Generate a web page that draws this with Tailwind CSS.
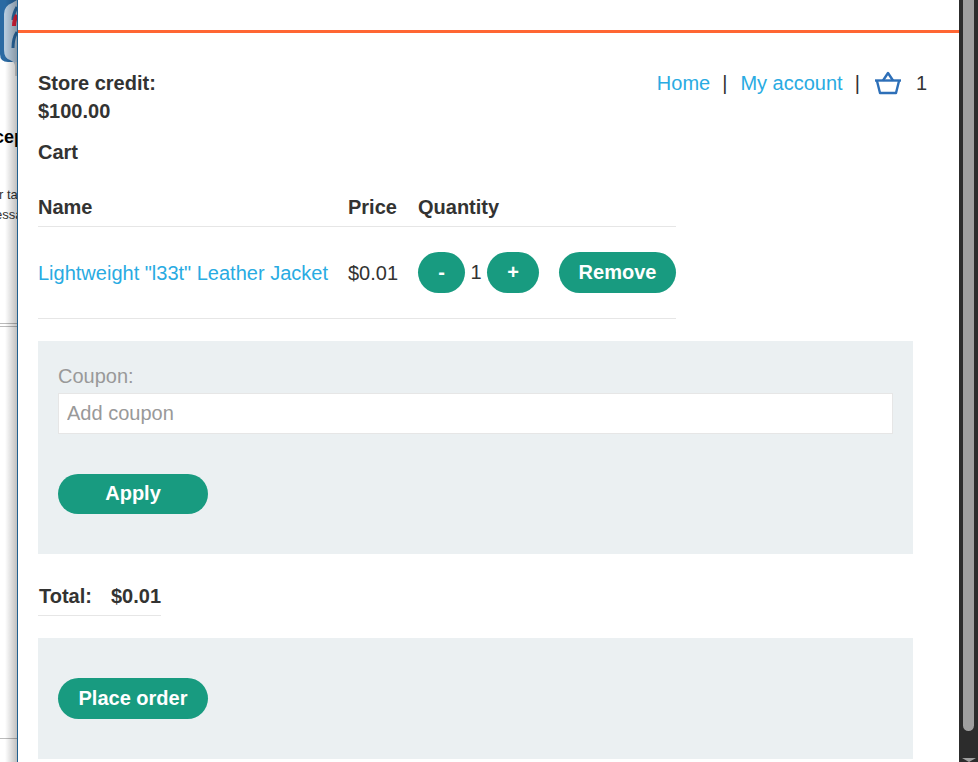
<!DOCTYPE html>
<html lang="en">
<head>
    <meta charset="UTF-8">
    <title>Cart</title>
    <script src="https://cdn.jsdelivr.net/npm/@tailwindcss/browser@4"></script>
</head>
<body class="bg-white font-['Liberation_Sans',Arial,sans-serif] text-[20px] text-[#333332] overflow-hidden">
    <div class="flex h-[762px] w-[978px] overflow-hidden">
        <!-- page behind the modal -->
        <div class="relative w-[17px] shrink-0 overflow-hidden bg-white">
            <svg class="absolute left-0 top-0" width="17" height="76" viewBox="0 0 17 76">
                <path d="M0 0H17V62H8Q0 62 0 54Z" fill="#2a6aa3"/>
                <path d="M4 14Q4 6 12 3L17 0V76H15V66Q15 62 10 60Q4 58 4 50Z" fill="#b6cbde"/>
                <path d="M15 62h2v14h-2z" fill="#d4d4d4"/>
                <path d="M17 7Q13 14 13 20" fill="none" stroke="#2a6aa3" stroke-width="3"/>
                <path d="M17 15Q14 20 14 26" fill="none" stroke="#e0203a" stroke-width="4"/>
                <path d="M17 32Q13 38 13 48" fill="none" stroke="#2a6aa3" stroke-width="3"/>
            </svg>
            <div class="absolute left-[-6px] top-[127px] text-[18px] font-bold leading-[20px] text-black">cep</div>
            <div class="absolute left-[-1px] top-[188px] text-[13px] leading-[14px] whitespace-nowrap text-[#333]">r ta</div>
            <div class="absolute left-[-5px] top-[208px] text-[13px] leading-[14px] whitespace-nowrap text-[#333]">essa</div>
            <div class="absolute left-0 top-[323px] w-[17px] h-[4px] border-y border-[#bbbbbb]"></div>
            <div class="absolute left-0 top-[738px] w-[17px] h-px bg-[#bbbbbb]"></div>
            <div class="absolute right-0 top-0 w-[12px] h-full bg-linear-to-r from-transparent to-black/25"></div>
        </div>

        <!-- modal -->
        <main class="w-[942px] shrink-0 border-l border-[#1f5f8f] bg-white">
            <div class="h-[33px] border-b-[3px] border-[#ff6633]"></div>
            <div class="pl-[20px] pr-[46px]">
                <div class="flex justify-between items-start pt-[36px]">
                    <p class="w-[140px] font-bold leading-[28px] text-[20px]">Store credit: $100.00</p>
                    <nav class="flex items-center h-[28px] leading-[28px] -mr-[14px]">
                        <a href="#" class="text-[#29abe2]">Home</a>
                        <span class="ml-[12px]">|</span>
                        <a href="#" class="ml-[13px] text-[#29abe2]">My account</a>
                        <span class="ml-[12px]">|</span>
                        <svg class="ml-[13px] w-[30px] h-[24px]" viewBox="0 0 30 24" fill="none" stroke="#2d6fb8" stroke-width="2.4" stroke-linejoin="round">
                            <path d="M2 9.5h26"/>
                            <path d="M4 10l3 12h16l3-12"/>
                            <path d="M10 9.5L15 2l5 7.5"/>
                        </svg>
                        <span class="ml-[13px]">1</span>
                    </nav>
                </div>
                <h2 class="mt-[13px] font-bold leading-[28px]">Cart</h2>
                <table class="mt-[22px] border-collapse text-left">
                    <thead>
                        <tr class="border-b border-[#e6e6e6] h-[38px]">
                            <th class="w-[310px] font-bold">Name</th>
                            <th class="w-[70px] font-bold">Price</th>
                            <th class="w-[258px] font-bold">Quantity</th>
                        </tr>
                    </thead>
                    <tbody>
                        <tr class="border-b border-[#e6e6e6] h-[92px]">
                            <td class="pt-[2px]"><a href="#" class="text-[#29abe2]">Lightweight "l33t" Leather Jacket</a></td>
                            <td class="pt-[2px]">$0.01</td>
                            <td>
                                <div class="flex items-center">
                                    <button class="w-[47px] h-[41px] rounded-[21px] bg-[#189b80] text-white font-bold">-</button>
                                    <span class="w-[22px] text-center">1</span>
                                    <button class="w-[52px] h-[41px] rounded-[21px] bg-[#189b80] text-white font-bold">+</button>
                                    <button class="ml-[20px] w-[117px] h-[41px] rounded-[21px] bg-[#189b80] text-white font-bold">Remove</button>
                                </div>
                            </td>
                        </tr>
                    </tbody>
                </table>
                <form class="mt-[22px] h-[213px] bg-[#ebf0f2] px-[20px] pt-[21px]">
                    <label class="block leading-[28px] text-[#999999]">Coupon:</label>
                    <input class="mt-[3px] block w-full h-[41px] bg-white border border-[#e6e6e6] px-[8px] placeholder:text-[#999999] text-[20px]" placeholder="Add coupon">
                    <button type="button" class="mt-[40px] w-[150px] h-[40px] pb-[2px] rounded-[21px] bg-[#189b80] text-white font-bold">Apply</button>
                </form>
                <table class="mt-[22px] border-collapse text-left">
                    <tr class="border-b border-[#e6e6e6] h-[40px] font-bold">
                        <th class="w-[73px] pl-[1px] pt-[2px] font-bold">Total:</th>
                        <th class="pt-[2px] font-bold">$0.01</th>
                    </tr>
                </table>
                <div class="mt-[22px] h-[121px] bg-[#ebf0f2] px-[20px] pt-[40px]">
                    <button class="w-[150px] h-[41px] pb-[2px] rounded-[21px] bg-[#189b80] text-white font-bold">Place order</button>
                </div>
            </div>
        </main>

        <!-- scrollbar -->
        <div class="relative w-[19px] shrink-0 bg-[#2c2c2c]">
            <div class="ml-[4px] w-[11px] h-[731px] bg-[#9f9f9f] rounded-b-[6px]"></div>
            <div class="absolute left-[3px] bottom-0 w-0 h-0 border-x-[7px] border-x-transparent border-t-[4px] border-t-[#9f9f9f]"></div>
        </div>
    </div>
</body>
</html>
